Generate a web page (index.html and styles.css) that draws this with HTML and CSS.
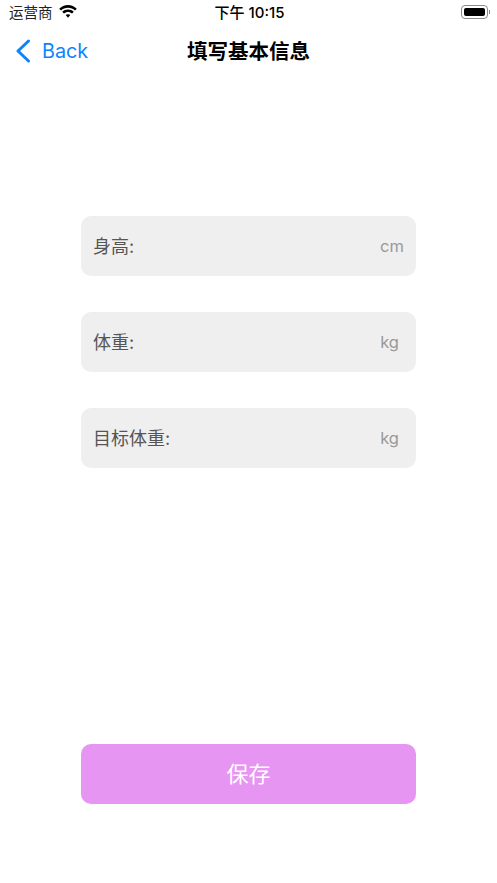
FILE: index.html
```html
<!DOCTYPE html>
<html lang="zh">
<head>
    <meta charset="utf-8">
    <title>填写基本信息</title>
    <link rel="stylesheet" href="styles.css">
</head>
<body>
<div class="status-bar">
    <div class="status-left">
        <span class="carrier">运营商</span>
        <svg class="wifi" width="20" height="15" viewBox="0 0 20 14">
            <path d="M10 3.200c2.700 0 5.100 1 7 2.800l1.800-1.800C16.500 2 13.400.5 10 .5S3.500 2 1.200 4.200L3 6c1.900-1.800 4.300-2.800 7-2.800z" fill="#000"/>
            <path d="M10 7.500c1.500 0 2.900.6 4 1.500l1.800-1.800C14.300 5.800 12.300 5 10 5s-4.300.8-5.800 2.200L6 9c1.100-.9 2.500-1.500 4-1.500z" fill="#000"/>
            <path d="M10 9.700c-.9 0-1.700.3-2.300.9L10 13.200l2.300-2.600c-.6-.6-1.400-.9-2.300-.9z" fill="#000"/>
        </svg>
    </div>
    <div class="time">下午 10:15</div>
    <div class="status-right">
        <div class="battery"><div class="battery-level"></div></div>
        <div class="battery-cap"></div>
    </div>
</div>

<div class="nav-bar">
    <a class="back">
        <svg width="16" height="24" viewBox="0 0 16 24">
            <path d="M13.500 2L3 12l10.500 10" fill="none" stroke="#0a84ff" stroke-width="3" stroke-linecap="round" stroke-linejoin="round"/>
        </svg>
        <span>Back</span>
    </a>
    <h1>填写基本信息</h1>
</div>

<div class="form">
    <div class="field">
        <span class="field-label">身高:</span>
        <span class="unit">cm</span>
    </div>
    <div class="field">
        <span class="field-label">体重:</span>
        <span class="unit unit-kg">kg</span>
    </div>
    <div class="field">
        <span class="field-label">目标体重:</span>
        <span class="unit unit-kg">kg</span>
    </div>
</div>

<div class="buttons">
    <button class="save-button">保存</button>
</div>
</body>
</html>
```

FILE: styles.css
```css
body {
    font-family: Inter, "Noto Sans CJK SC", sans-serif;
    margin: 0;
    width: 497px;
    height: 883px;
    background-color: white;
    overflow: hidden;
}

.status-bar {
    display: flex;
    justify-content: space-between;
    align-items: center;
    height: 23px;
    padding: 0 7px 2px 9px;
    font-size: 14.500px;
    color: #000;
}

.status-left {
    display: flex;
    align-items: center;
    gap: 5px;
    width: 120px;
}

.carrier {
    color: #222;
}

.wifi {
    margin-top: -1px;
}

.time {
    font-size: 15px;
    font-weight: 500;
}

.status-right {
    display: flex;
    align-items: center;
    justify-content: flex-end;
    width: 120px;
}

.battery {
    width: 27px;
    height: 14px;
    border: 1px solid #8a8a8a;
    border-radius: 4px;
    padding: 2px;
    box-sizing: border-box;
}

.battery-level {
    height: 100%;
    background-color: #000;
    border-radius: 2px;
}

.battery-cap {
    width: 1px;
    height: 4px;
    margin-left: 1px;
    background-color: #8a8a8a;
}

.nav-bar {
    position: relative;
    display: flex;
    align-items: center;
    justify-content: center;
    height: 51px;
}

.nav-bar h1 {
    font-size: 20.500px;
    font-weight: bold;
    margin: 0 0 1px;
    color: #000;
}

.back {
    position: absolute;
    left: 15px;
    top: 14px;
    display: flex;
    align-items: center;
    gap: 11px;
    font-size: 19.800px;
    color: #0a84ff;
}

.form {
    display: flex;
    flex-direction: column;
    gap: 36px;
    margin: 140px 81px 0;
}

.field {
    display: flex;
    justify-content: space-between;
    align-items: center;
    height: 60px;
    padding: 0 12px;
    background-color: #efefef;
    border-radius: 10px;
    font-size: 18px;
}

.field-label {
    color: #555;
    padding-bottom: 3px;
}

.unit {
    color: #999;
    font-size: 16.500px;
}

.unit-kg {
    padding-right: 5px;
}

.buttons {
    margin: 276px 81px 0;
}

.save-button {
    display: block;
    width: 100%;
    height: 60px;
    padding: 0 0 5px;
    background-color: #e795f2;
    border: none;
    border-radius: 10px;
    color: white;
    font-family: inherit;
    font-size: 22px;
}
```
